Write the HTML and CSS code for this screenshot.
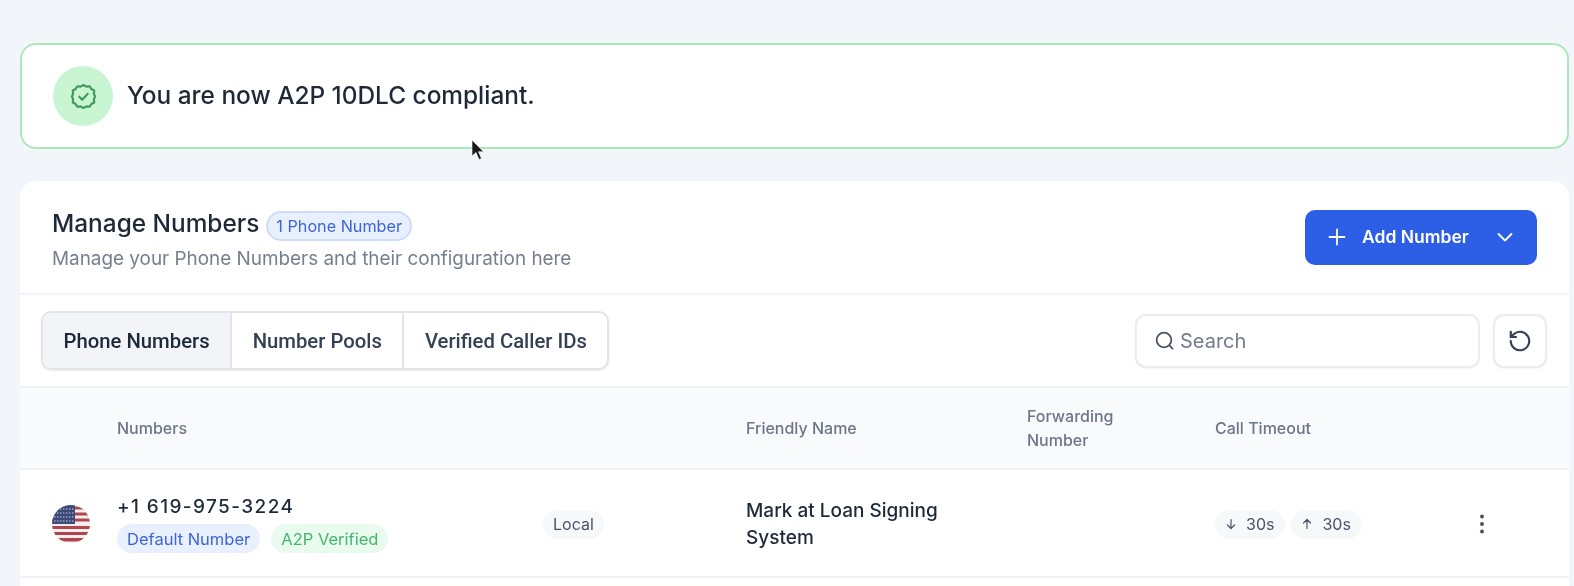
FILE: index.html
```html
<!DOCTYPE html>
<html lang="en">
<head>
<meta charset="utf-8">
<title>Manage Numbers</title>
<link rel="stylesheet" href="styles.css">
</head>
<body>
<main class="page">
  <section class="banner">
    <span class="banner-icon">
      <svg viewBox="0 0 24 24" width="29" height="29" fill="none" stroke="#3f9a5c" stroke-width="1.800" stroke-linecap="round" stroke-linejoin="round"><path d="M12 2.500l2.400 1.300 2.700-.3 1.400 2.300 2.400 1.300-.3 2.700 1 2.200-1 2.200.3 2.700-2.400 1.300-1.400 2.300-2.700-.3-2.400 1.300-2.400-1.300-2.700.3-1.400-2.300-2.400-1.300.3-2.700-1-2.200 1-2.200-.3-2.700 2.400-1.300 1.400-2.300 2.700.3z"/><path d="M8.500 12.200l2.400 2.400 4.600-4.800"/></svg>
    </span>
    <p class="banner-text">You are now A2P 10DLC compliant.</p>
  </section>

  <section class="card">
    <header class="card-head">
      <div>
        <div class="title-row">
          <h1 class="title">Manage Numbers</h1>
          <span class="count">1 Phone Number</span>
        </div>
        <p class="subtitle">Manage your Phone Numbers and their configuration here</p>
      </div>
      <button class="add-btn" type="button">
        <svg viewBox="0 0 20 20" width="20" height="20" fill="none" stroke="#fff" stroke-width="1.800" stroke-linecap="round"><path d="M10 2.500v15M2.500 10h15"/></svg>
        <span class="add-label">Add Number</span>
        <svg viewBox="0 0 20 20" width="20" height="20" fill="none" stroke="#fff" stroke-width="1.800" stroke-linecap="round" stroke-linejoin="round"><path d="M3.500 7l6.500 6.500L16.500 7"/></svg>
      </button>
    </header>

    <div class="toolbar">
      <div class="tabs">
        <span class="tab tab-active">Phone Numbers</span>
        <span class="tab">Number Pools</span>
        <span class="tab">Verified Caller IDs</span>
      </div>
      <div class="tools">
        <label class="search">
          <svg viewBox="0 0 20 20" width="21" height="21" fill="none" stroke="#475467" stroke-width="1.700" stroke-linecap="round"><circle cx="9.500" cy="9.500" r="7"/><path d="M14.700 14.700l3 3"/></svg>
          <span class="search-text">Search</span>
        </label>
        <button class="refresh" type="button">
          <svg viewBox="0 0 24 24" width="26" height="26" fill="none" stroke="#344054" stroke-width="2" stroke-linecap="round" stroke-linejoin="round"><path d="M3.500 12a8.500 8.500 0 1 0 2.700-6.200L3.500 8.300"/><path d="M3.500 3.500v4.800h4.800"/></svg>
        </button>
      </div>
    </div>

    <div class="row row-head">
      <span></span>
      <span>Numbers</span>
      <span></span>
      <span>Friendly Name</span>
      <span class="forward">Forwarding Number</span>
      <span>Call Timeout</span>
      <span></span>
    </div>

    <div class="row row-body">
      <svg class="flag" viewBox="0 0 38 38" width="38" height="38">
        <defs><clipPath id="flag-clip"><circle cx="19" cy="19" r="19"/></clipPath></defs>
        <g clip-path="url(#flag-clip)">
          <rect width="38" height="38" fill="#f4eeee"/>
          <path d="M0 1.500h38v3H0zM0 7.500h38v3H0zM0 13.500h38v3H0zM0 21h38v3H0zM0 27h38v3H0zM0 33h38v3.500H0z" fill="#b0474f"/>
          <rect width="23" height="19" fill="#3c4a78"/>
          <path d="M2 4h20M2 8h20M2 12h20M2 16h20" stroke="#c7cce0" stroke-width="1.200" stroke-dasharray="1.500 1.500"/>
        </g>
      </svg>
      <div class="number-cell">
        <div class="number">+1 619-975-3224</div>
        <div class="pills">
          <span class="pill pill-blue">Default Number</span>
          <span class="pill pill-green">A2P Verified</span>
        </div>
      </div>
      <div><span class="pill pill-gray">Local</span></div>
      <div class="friendly">Mark at Loan Signing System</div>
      <div></div>
      <div class="timeouts">
        <span class="pill pill-time">
          <svg viewBox="0 0 12 12" width="12" height="12" fill="none" stroke="#475467" stroke-width="1.200" stroke-linecap="round" stroke-linejoin="round"><path d="M6 1.500v9M2.500 7L6 10.500 9.500 7"/></svg>30s</span>
        <span class="pill pill-time">
          <svg viewBox="0 0 12 12" width="12" height="12" fill="none" stroke="#475467" stroke-width="1.200" stroke-linecap="round" stroke-linejoin="round"><path d="M6 10.500v-9M2.500 5L6 1.500 9.500 5"/></svg>30s</span>
      </div>
      <svg class="kebab" viewBox="0 0 12 24" width="12" height="24" fill="#475467"><circle cx="6" cy="4.500" r="2"/><circle cx="6" cy="12" r="2"/><circle cx="6" cy="19.500" r="2"/></svg>
    </div>
  </section>
</main>
<svg class="cursor" viewBox="0 0 14 24" width="14" height="24"><path d="M1 1v16l4-3.500 3 7 2.500-1-3-6.800h5z" fill="#1a1a1a" stroke="#fff" stroke-width=".6"/></svg>
</body>
</html>
```

FILE: styles.css
```css
* { box-sizing: border-box; }
html, body { margin: 0; height: 586px; overflow: hidden; }
body {
  background: #f2f5f9;
  font-family: Inter, "Liberation Sans", sans-serif;
  color: #1d2939;
  position: relative;
}
p, h1 { margin: 0; }
button { font: inherit; }

.page { padding: 43px 5px 0 20px; filter: blur(.35px); }

.banner {
  height: 106px;
  display: flex;
  align-items: center;
  gap: 14px;
  padding: 0 0 0 31px;
  background: #fff;
  border: 2px solid #aae8ba;
  border-radius: 16px;
}
.banner-icon {
  width: 60px;
  height: 60px;
  border-radius: 50%;
  background: #c9f5d3;
  display: flex;
  align-items: center;
  justify-content: center;
}
.banner-text { margin-bottom: 2px; font-size: 24.400px; font-weight: 500; line-height: 32px; color: #1d2939; }

.card {
  margin-top: 32px;
  height: 420px;
  background: #fff;
  border-radius: 16px 16px 0 0;
}
.card-head {
  height: 114px;
  display: flex;
  align-items: flex-start;
  justify-content: space-between;
  padding: 28px 32px 0 32px;
  border-bottom: 2px solid #f2f4f7;
}
.title-row { display: flex; align-items: flex-start; gap: 7px; height: 32px; }
.title { font-size: 24.400px; font-weight: 500; line-height: 28px; color: #1d2939; }
.count {
  height: 30px;
  margin-top: 2px;
  display: inline-flex;
  align-items: center;
  padding: 0 8px;
  font-size: 16.200px;
  color: #3d65d6;
  background: #e8effd;
  border: 2px solid #cfdcf9;
  border-radius: 15px;
}
.subtitle { margin-top: 6px; font-size: 18.900px; line-height: 24px; color: #757f90; }

.add-btn {
  width: 232px;
  height: 55px;
  margin-top: 1px;
  display: flex;
  align-items: center;
  padding: 0 22px 2px;
  color: #fff;
  font-size: 17.500px;
  font-weight: 600;
  background: #2d5ee6;
  border: 0;
  border-radius: 10px;
}
.add-label { margin: 0 auto 0 15px; }

.toolbar {
  height: 93px;
  display: flex;
  align-items: center;
  justify-content: space-between;
  padding: 0 22px 0 21px;
  border-bottom: 2px solid #f0f2f5;
}
.tabs {
  display: flex;
  height: 59px;
  border: 2px solid #e2e4e9;
  border-radius: 10px;
  box-shadow: 0 1px 2px rgba(16, 24, 40, .08);
  overflow: hidden;
}
.tab {
  display: flex;
  align-items: center;
  padding: 0 20.500px;
  font-size: 20.300px;
  font-weight: 500;
  font-family: Roboto, Inter, sans-serif;
  color: #344054;
  border-left: 2px solid #e2e4e9;
}
.tab:first-child { border-left: 0; }
.tab-active { background: #f2f4f7; color: #1d2939; }

.tools { display: flex; align-items: center; gap: 13px; }
.search {
  width: 345px;
  height: 54px;
  display: flex;
  align-items: center;
  gap: 5px;
  padding: 0 17px;
  background: #fff;
  border: 2px solid #eaecf0;
  border-radius: 11px;
  box-shadow: 0 1px 2px rgba(16, 24, 40, .05);
}
.search-text { font-size: 20px; color: #737d8e; }
.refresh {
  width: 54px;
  height: 54px;
  display: flex;
  align-items: center;
  justify-content: center;
  padding: 0;
  background: #fff;
  border: 2px solid #eaecf0;
  border-radius: 11px;
  box-shadow: 0 1px 2px rgba(16, 24, 40, .05);
}

.row {
  display: grid;
  grid-template-columns: 65px 426px 203px 281px 188px 260px 1fr;
  align-items: center;
  padding-left: 32px;
}
.row-head {
  height: 82px;
  background: #f9fafc;
  border-bottom: 2px solid #f0f2f5;
  font-size: 16px;
  line-height: 24px;
  color: #6c7688;
  font-weight: 500;
}
.forward { width: 110px; }
.row-body {
  height: 108px;
  padding-top: 2px;
  border-bottom: 2px solid #f0f2f5;
}
.flag { display: block; }
.number { font-size: 19px; line-height: 24px; letter-spacing: 1.400px; font-weight: 500; color: #1d2939; margin-bottom: 5px; }
.pills { display: flex; gap: 11px; }
.pill {
  display: inline-flex;
  align-items: center;
  height: 29px;
  padding: 0 10px;
  font-size: 16.500px;
  border-radius: 15px;
}
.pill-blue { background: #e8effd; color: #3d65d6; }
.pill-green { background: #e8fbee; color: #45b56e; }
.pill-gray { background: #f7f8fa; color: #475467; font-size: 16px; }
.friendly { width: 220px; font-size: 19px; line-height: 27px; font-weight: 500; color: #1d2939; }
.timeouts { display: flex; gap: 6px; }
.pill-time { gap: 9px; background: #f7f8fa; color: #475467; padding: 0 11px 0 10px; font-size: 16px; }
.kebab { display: block; margin-left: 1px; }

.cursor { position: absolute; left: 471px; top: 139px; }
```
